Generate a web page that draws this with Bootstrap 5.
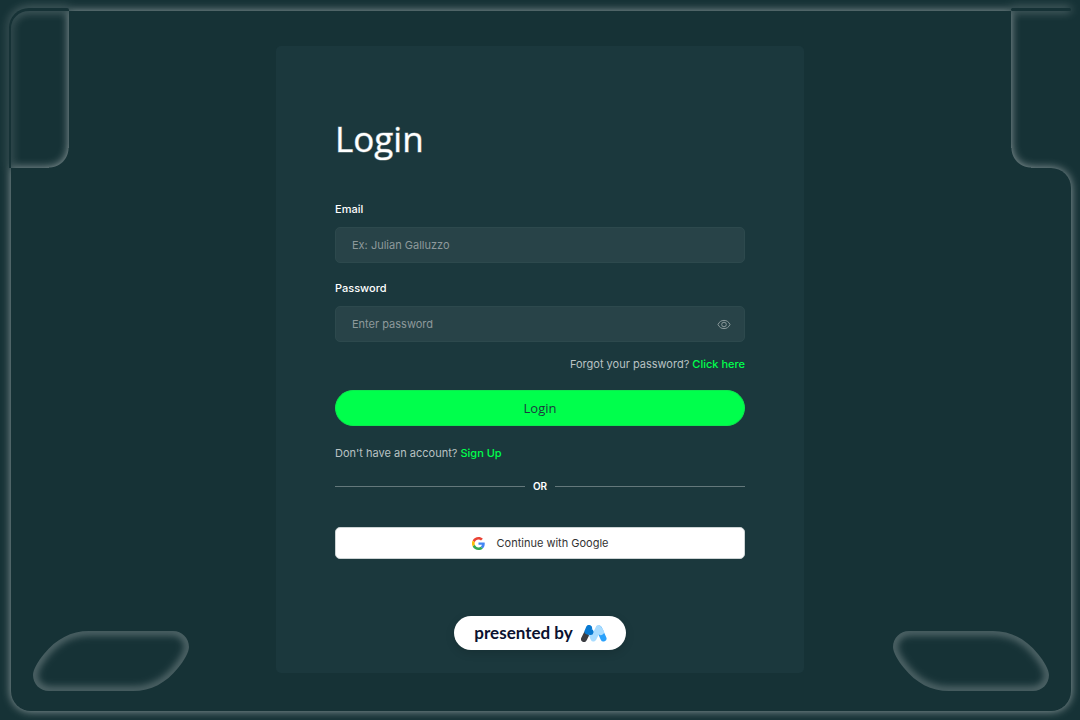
<!DOCTYPE html>
<html lang="en">
<head>
<meta charset="utf-8">
<meta name="viewport" content="width=device-width, initial-scale=1">
<title>Login</title>
<link href="https://cdn.jsdelivr.net/npm/bootstrap@5.3.0/dist/css/bootstrap.min.css" rel="stylesheet">
<style>
:root{--page:#163236;--panel:#1b383d;--field:#284348;--neon:#00ff4c}
body{background:var(--page);color:#fff;font-family:Inter,sans-serif;font-size:11px;line-height:16px}
.page-shell{min-height:100vh;padding:46px 16px 47px}
/* glowing outline: one shadow around the union of the pieces */
.outline-art{inset:0;filter:drop-shadow(0 0 5px rgba(255,255,255,.54));pointer-events:none}
.outline-art span{position:absolute;background:var(--page)}
.outline-art .upper{inset:11px 69px 9px}
.outline-art .lower{inset:168px 9px 9px 11px;border-radius:0 20px 20px 20px;border-top-left-radius:0}
.outline-art .notch{top:148px;width:20px;height:20px}
.outline-art .notch-l{left:49px;background:radial-gradient(circle at 0 0,transparent 19px,var(--page) 20px)}
.outline-art .notch-r{right:49px;background:radial-gradient(circle at 100% 0,transparent 19px,var(--page) 20px)}
.outline-art .rim{top:8px;left:9px;width:60px;height:160px;background:none;border:solid var(--page);border-width:3px 0 0 2px;border-radius:20px 2px 0 0}
.outline-art .bar{top:8px;right:9px;width:60px;height:3px;border-radius:2px}
.leaf{bottom:29px;width:156px;height:60px;pointer-events:none}
.leaf-l{left:33px}
.leaf-r{right:31px}
.panel{width:100%;max-width:528px;background:var(--panel);border-radius:5px;padding:68px 59px 23px}
h1{font:400 35px/50px "Open Sans",sans-serif;-webkit-text-stroke:1px rgba(255,255,255,.4);margin:0 0 36px}
.field-label{font-weight:500;line-height:18px;margin-bottom:9px}
.field,.field:focus{height:36px;background:var(--field);border:1px solid #2d494d;border-radius:5px;color:#fff;font-size:11px;line-height:16px;padding:0 16px}
.field::placeholder{color:#8d999b;opacity:1}
.eye{right:14px;top:11px;width:14px;height:14px;color:#8a999b}
.muted-line{color:#b9c2c3;line-height:18px}
.muted-line a{color:var(--neon);font-weight:500;text-decoration:none}
.forgot{margin:13px 0 17px}
.signup{margin:18px 0 17px}
.btn-go,.btn-go:hover{height:36px;background:var(--neon);border:1px solid #0ce94e;color:#1c393e;font:400 13px/18px "Open Sans",sans-serif;padding:0}
.rule{height:1px;background:#64787b}
.or-text{font-size:10px;font-weight:600;line-height:14px}
.btn-google,.btn-google:hover{height:32px;margin-top:34px;background:#fff;border:1px solid #ccd3d4;border-radius:5px;color:#333;font-size:11px;line-height:16px;padding:0}
.presenter-row{margin-top:57px}
.presenter{height:34px;background:#fff;color:#0b1130;font:700 17px/20px Lato,sans-serif;padding:0 19px 0 20px;box-shadow:0 3px 10px rgba(0,0,0,.14)}
</style>
</head>
<body>
<main class="page-shell position-relative d-flex justify-content-center align-items-start">
  <div class="outline-art position-absolute" aria-hidden="true">
    <span class="rim"></span><span class="bar"></span>
    <span class="upper"></span><span class="lower"></span>
    <span class="notch notch-l"></span><span class="notch notch-r"></span>
  </div>
  <svg class="leaf leaf-l position-absolute" viewBox="0 0 156 60" aria-hidden="true">
    <defs>
      <path id="leaf" d="M56 0H140C149 0 156 7 156 16C156 21 151 30 145 37C133 52 118 60 100 60H16C7 60 0 53 0 44C0 39 5 30 11 23C23 8 38 0 56 0Z"/>
      <clipPath id="leafClip"><use href="#leaf"/></clipPath>
      <filter id="soft" x="-20%" y="-40%" width="140%" height="180%"><feGaussianBlur stdDeviation="4"/></filter>
    </defs>
    <g id="leafGlow" clip-path="url(#leafClip)"><use href="#leaf" fill="none" stroke="#fff" stroke-opacity=".46" stroke-width="5" filter="url(#soft)"/></g>
  </svg>
  <svg class="leaf leaf-r position-absolute" viewBox="0 0 156 60" aria-hidden="true"><use href="#leafGlow" transform="matrix(-1 0 0 1 156 0)"/></svg>

  <section class="panel position-relative">
    <h1>Login</h1>
    <form>
      <label class="field-label d-block" for="email">Email</label>
      <input class="form-control field" type="email" id="email" placeholder="Ex: Julian Galluzzo">
      <label class="field-label d-block mt-3" for="password">Password</label>
      <div class="position-relative">
        <input class="form-control field pe-5" type="password" id="password" placeholder="Enter password">
        <button class="eye btn p-0 border-0 d-flex position-absolute" type="button" aria-label="Show password">
          <svg width="14" height="14" viewBox="0 0 14 14" fill="none" stroke="currentColor"><path d="M1 7.500C2.200 4.800 4.300 3.400 7 3.400S11.800 4.800 13 7.500C11.800 10.200 9.700 11.600 7 11.600S2.200 10.200 1 7.500Z"/><circle cx="7" cy="7.500" r="2.300"/></svg>
        </button>
      </div>
      <p class="muted-line text-end forgot">Forgot your password? <a href="#">Click here</a></p>
      <button class="btn btn-go w-100 rounded-pill" type="submit">Login</button>
    </form>
    <p class="muted-line signup">Don't have an account? <a href="#">Sign Up</a></p>
    <div class="d-flex align-items-center gap-2">
      <span class="rule flex-fill"></span><span class="or-text">OR</span><span class="rule flex-fill"></span>
    </div>
    <button class="btn btn-google w-100 d-flex align-items-center justify-content-center" type="button">
      <svg class="me-2" width="13" height="13" viewBox="0 0 48 48" aria-hidden="true"><path fill="#EA4335" d="M24 9.500c3.500 0 6.700 1.200 9.200 3.600l6.900-6.900C35.900 2.400 30.500 0 24 0 14.600 0 6.500 5.400 2.600 13.200l8 6.200C12.400 13.700 17.700 9.500 24 9.500z"/><path fill="#4285F4" d="M47 24.600c0-1.600-.2-3.100-.4-4.600H24v9h12.900c-.6 3-2.200 5.500-4.700 7.200l7.700 6C44.400 38 47 31.800 47 24.600z"/><path fill="#FBBC05" d="M10.500 28.600a14.500 14.500 0 0 1 0-9.200l-8-6.200a24 24 0 0 0 0 21.600z"/><path fill="#34A853" d="M24 48c6.500 0 11.900-2.100 15.900-5.800l-7.700-6c-2.200 1.500-4.900 2.300-8.200 2.300-6.300 0-11.600-4.200-13.500-9.900l-8 6.200C6.500 42.600 14.600 48 24 48z"/></svg>
      <span class="ms-1">Continue with Google</span>
    </button>
    <div class="d-flex justify-content-center presenter-row">
      <a class="presenter d-inline-flex align-items-center gap-2 rounded-pill text-decoration-none" href="#">
        <span>presented by</span>
        <svg width="26" height="17" viewBox="0 0 26 17" fill="none" stroke-linecap="round" stroke-linejoin="round" aria-hidden="true"><path d="M3 14L5.500 9" stroke="#3b3d43" stroke-width="6"/><path d="M18 3.500L22.500 13.500" stroke="#2ba1fb" stroke-width="6"/><path d="M8 3.200L12.500 13.500L17.500 3.200L20 7" stroke="#a9dcff" stroke-width="6"/><path d="M8 3L6.500 6.500L9.500 7" stroke="#0879d1" stroke-width="6"/></svg>
      </a>
    </div>
  </section>
</main>
<script src="https://cdn.jsdelivr.net/npm/bootstrap@5.3.0/dist/js/bootstrap.bundle.min.js"></script>
</body>
</html>
